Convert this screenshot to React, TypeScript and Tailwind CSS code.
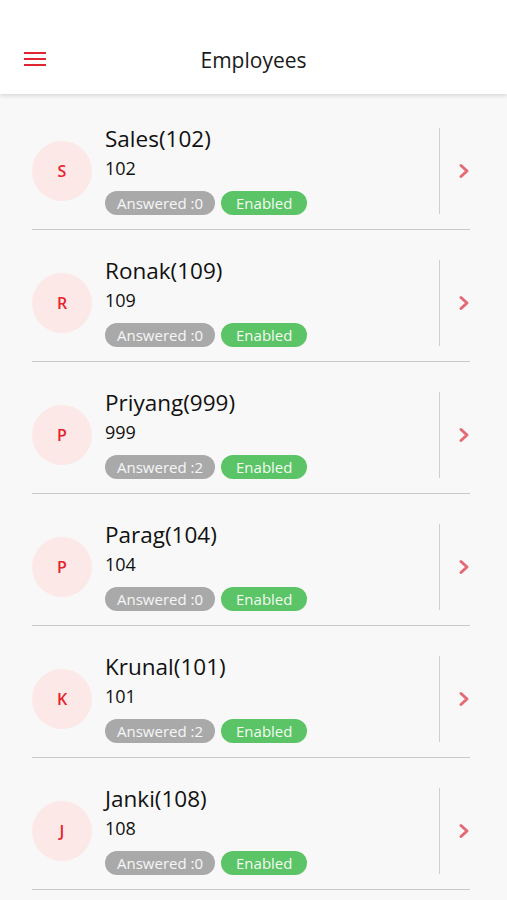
import React from "react";

interface Employee {
  name: string;
  ext: string;
  answered: number;
}

const employees: Employee[] = [
  { name: "Sales", ext: "102", answered: 0 },
  { name: "Ronak", ext: "109", answered: 0 },
  { name: "Priyang", ext: "999", answered: 2 },
  { name: "Parag", ext: "104", answered: 0 },
  { name: "Krunal", ext: "101", answered: 2 },
  { name: "Janki", ext: "108", answered: 0 },
];

function Row({ name, ext, answered }: Employee) {
  return (
    <div className="ml-[32px] w-[438px] h-[132px] border-b border-[#c9c9c9] flex items-start pt-[30px]">
      <div className="mt-[13px] w-[60px] h-[60px] rounded-full bg-[#fde8e8] flex items-center justify-center text-[16px] font-semibold text-[#e8232b] shrink-0">
        {name[0]}
      </div>
      <div className="ml-[13px] flex-1 flex flex-col">
        <div className="text-[22.5px] leading-[30px] text-[#111] mt-[-4px]">
          {name}({ext})
        </div>
        <div className="text-[18px] leading-[24px] text-[#111] mt-[2px]">{ext}</div>
        <div className="flex gap-[6px] mt-[11px]">
          <span className="h-[24px] px-[12px] rounded-full bg-[#a9a9a9] text-white/90 text-[15px] leading-[24px]">
            Answered :{answered}
          </span>
          <span className="h-[24px] px-[15px] rounded-full bg-[#5bc466] text-white/95 text-[15px] leading-[24px]">
            Enabled
          </span>
        </div>
      </div>
      <div className="w-px h-[86px] bg-[#cfcfcf]" />
      <div className="w-[30px] h-[86px] flex items-center justify-end">
        <svg width="12" height="16" viewBox="0 0 12 16" fill="none">
          <path d="M3 2.5 L9 8 L3 13.5" stroke="#e46a76" strokeWidth="3" strokeLinecap="round" strokeLinejoin="round" />
        </svg>
      </div>
    </div>
  );
}

export default function App() {
  return (
    <div className="w-[507px] h-[900px] overflow-hidden bg-[#f8f8f8] font-['Open_Sans',sans-serif]">
      <header className="relative h-[94px] bg-white shadow-[0_2px_4px_rgba(0,0,0,0.12)] flex items-end pb-[22px] z-10">
        <button className="ml-[24px] w-[22px] flex flex-col gap-[4px] mb-[6px]">
          <span className="h-[2px] bg-[#e0262e]" />
          <span className="h-[2px] bg-[#e0262e]" />
          <span className="h-[2px] bg-[#e0262e]" />
        </button>
        <h1 className="absolute left-0 right-0 bottom-[20px] text-center text-[21px] leading-[28px] text-[#1a1a1a]">
          Employees
        </h1>
      </header>
      <div className="pt-[4px]">
        {employees.map((e) => (
          <Row key={e.name} {...e} />
        ))}
      </div>
    </div>
  );
}
